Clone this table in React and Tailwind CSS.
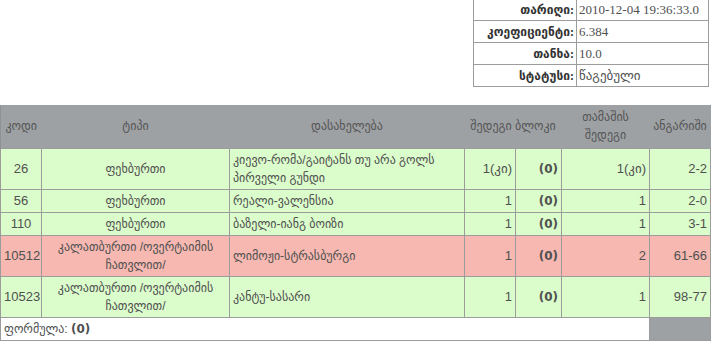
import React from 'react';

const info = [
  { label: 'თარიღი:', value: '2010-12-04 19:36:33.0' },
  { label: 'კოეფიციენტი:', value: '6.384' },
  { label: 'თანხა:', value: '10.0' },
  { label: 'სტატუსი:', value: 'წაგებული' },
];

const rows = [
  { code: '26', type: 'ფეხბურთი', name: 'კიევო-რომა/გაიტანს თუ არა გოლს პირველი გუნდი', result: '1(კი)', block: '(0)', game: '1(კი)', score: '2-2', lost: false },
  { code: '56', type: 'ფეხბურთი', name: 'რეალი-ვალენსია', result: '1', block: '(0)', game: '1', score: '2-0', lost: false },
  { code: '110', type: 'ფეხბურთი', name: 'ბაზელი-იანგ ბოიზი', result: '1', block: '(0)', game: '1', score: '3-1', lost: false },
  { code: '10512', type: 'კალათბურთი /ოვერტაიმის ჩათვლით/', name: 'ლიმოჟი-სტრასბურგი', result: '1', block: '(0)', game: '2', score: '61-66', lost: true },
  { code: '10523', type: 'კალათბურთი /ოვერტაიმის ჩათვლით/', name: 'კანტუ-სასარი', result: '1', block: '(0)', game: '1', score: '98-77', lost: false },
];

const cell = 'border border-[#9c9c9c] px-[3px] py-[2px] align-middle';
const boldNum = { fontFamily: '"DejaVu Sans", sans-serif' };

export default function App() {
  return (
    <div className="w-[713px] h-[342px] overflow-hidden bg-white text-[13px] leading-[18px] text-[#505050]" style={{ fontFamily: '"Liberation Sans", "DejaVu Sans", sans-serif' }}>
      <div className="flex justify-end pr-[4px] mt-[-2px]">
        <table className="w-[236px] border-collapse table-fixed" style={{ fontFamily: '"Liberation Serif", "DejaVu Sans", serif' }}>
          <colgroup>
            <col className="w-[103px]" />
            <col />
          </colgroup>
          <tbody>
            {info.map((r) => (
              <tr key={r.label} className="h-[22px]">
                <td className="border border-[#9c9c9c] px-[2px] text-right font-bold text-[#333] whitespace-nowrap text-[12px]">{r.label}</td>
                <td className="border border-[#9c9c9c] px-[2px] whitespace-nowrap">{r.value}</td>
              </tr>
            ))}
          </tbody>
        </table>
      </div>

      <table className="mt-[18px] w-[710px] border-collapse table-fixed">
        <colgroup>
          <col className="w-[41px]" />
          <col className="w-[188px]" />
          <col className="w-[235px]" />
          <col className="w-[51px]" />
          <col className="w-[46px]" />
          <col className="w-[88px]" />
          <col className="w-[61px]" />
        </colgroup>
        <thead>
          <tr className="h-[43px] bg-[#9ea1a4] text-[#555] text-[12px]">
            <th className="font-normal text-center px-[1px] border-l border-[#8f9194]">კოდი</th>
            <th className="font-normal text-center">ტიპი</th>
            <th className="font-normal text-center">დასახელება</th>
            <th className="font-normal text-center" colSpan={2}>შედეგი ბლოკი</th>
            <th className="font-normal text-center leading-[18px]">თამაშის<br />შედეგი</th>
            <th className="font-normal text-center whitespace-nowrap">ანგარიში</th>
          </tr>
        </thead>
        <tbody>
          {rows.map((r) => (
            <tr key={r.code} className={r.lost ? 'bg-[#f6b8b0]' : 'bg-[#dbfccb]'}>
              <td className={`${cell} text-center`}>{r.code}</td>
              <td className={`${cell} text-center text-[12px]`}>{r.type}</td>
              <td className={`${cell} text-left text-[12px]`}>{r.name}</td>
              <td className={`${cell} text-right`}>{r.result}</td>
              <td className={`${cell} text-right font-bold text-[12px]`} style={boldNum}>{r.block}</td>
              <td className={`${cell} text-right`}>{r.game}</td>
              <td className={`${cell} text-right`}>{r.score}</td>
            </tr>
          ))}
          <tr className="h-[23px]">
            <td className={`${cell} text-left text-[12px]`} colSpan={6}>
              ფორმულა: <span className="font-bold" style={boldNum}>(0)</span>
            </td>
            <td className="border border-[#9c9c9c] bg-[#9ea1a4]"></td>
          </tr>
        </tbody>
      </table>
    </div>
  );
}
